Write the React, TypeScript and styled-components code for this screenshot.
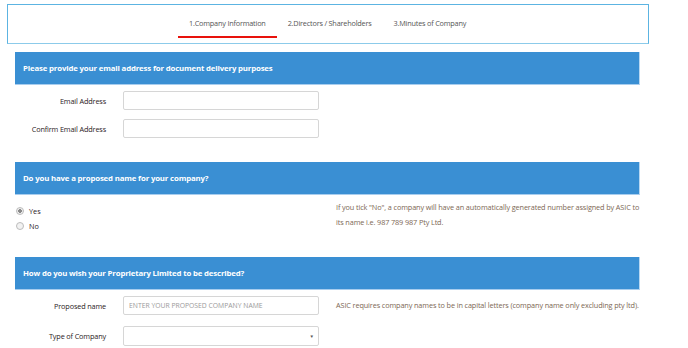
import React from "react";
import styled, { createGlobalStyle } from "styled-components";

const GlobalStyle = createGlobalStyle`
  body {
    margin: 0;
    background: #fff;
    font-family: "Open Sans", "Liberation Sans", sans-serif;
  }
`;

const Page = styled.div`
  width: 688px;
  height: 348px;
  padding: 4px 0 0 7px;
  box-sizing: border-box;
  overflow: hidden;
`;

const TabBar = styled.div`
  width: 642px;
  height: 40px;
  box-sizing: border-box;
  border: 1px solid #5cb4e2;
  border-bottom-color: #8ccbea;
  display: flex;
  padding-left: 170px;
`;

const Tab = styled.div<{ $active?: boolean }>`
  position: relative;
  padding: 0 11px;
  font-size: 7.3px;
  color: #555;
  line-height: 36px;
  letter-spacing: -0.2px;
  ${(p) =>
    p.$active &&
    `
    &::after {
      content: "";
      position: absolute;
      left: 0;
      right: 0;
      bottom: 5px;
      height: 2px;
      background: #e8120c;
    }
  `}
`;

const Section = styled.section`
  margin-left: 8px;
  width: 625px;
`;

const Header = styled.div<{ $top: number }>`
  margin-top: ${(p) => p.$top}px;
  height: 33px;
  box-sizing: border-box;
  background: #3a8fd3;
  border-right: 1px solid #b9d8f2;
  border-bottom: 1px solid #a8cdee;
  color: #fff;
  font-weight: 700;
  font-size: 7.8px;
  letter-spacing: -0.15px;
  display: flex;
  align-items: center;
  padding-left: 8px;
`;

const FormRow = styled.div<{ $top: number }>`
  display: flex;
  align-items: center;
  margin-top: ${(p) => p.$top}px;
`;

const Label = styled.label`
  width: 91px;
  text-align: right;
  font-size: 7.3px;
  font-weight: 500;
  color: #2a211d;
  letter-spacing: -0.15px;
  margin-right: 17px;
`;

const Input = styled.input`
  width: 196px;
  height: 19px;
  box-sizing: border-box;
  border: 1px solid #d6d6d6;
  border-radius: 2px;
  padding: 0 5px;
  font-family: inherit;
  font-size: 6.8px;
  outline: none;
  &::placeholder {
    color: #9a9a9a;
    text-transform: uppercase;
  }
`;

const Select = styled.div`
  width: 196px;
  height: 20px;
  box-sizing: border-box;
  border: 1px solid #d6d6d6;
  border-radius: 2px;
  display: flex;
  align-items: center;
  justify-content: flex-end;
  padding-right: 4px;
  font-size: 4.5px;
  color: #555;
`;

const Note = styled.p`
  margin: 0 0 0 17px;
  font-size: 7.3px;
  line-height: 15px;
  color: #7c6754;
  letter-spacing: -0.12px;
  white-space: nowrap;
`;

const QuestionRow = styled.div`
  display: flex;
  justify-content: space-between;
  margin-top: 5px;
`;

const Radios = styled.div`
  display: flex;
  flex-direction: column;
  gap: 5px;
  padding-top: 6px;
  padding-left: 1px;
`;

const RadioLabel = styled.label`
  display: flex;
  align-items: center;
  gap: 5px;
  font-size: 7.3px;
  color: #2a211d;
`;

const Dot = styled.span<{ $on?: boolean }>`
  width: 6px;
  height: 6px;
  border-radius: 50%;
  border: 1px solid #bcbcbc;
  background: ${(p) => (p.$on ? "radial-gradient(circle, #8a8a8a 0 1.6px, #eee 2px)" : "#f2f2f2")};
`;

const SideNote = styled.p`
  margin: 0;
  font-size: 7.3px;
  line-height: 15px;
  color: #7c6754;
  letter-spacing: -0.12px;
  width: 304px;
`;

export default function App() {
  return (
    <Page>
      <GlobalStyle />
      <TabBar>
        <Tab $active>1.Company Information</Tab>
        <Tab>2.Directors / Shareholders</Tab>
        <Tab>3.Minutes of Company</Tab>
      </TabBar>

      <Section>
        <Header $top={8}>Please provide your email address for document delivery purposes</Header>
        <FormRow $top={6}>
          <Label>Email Address</Label>
          <Input />
        </FormRow>
        <FormRow $top={9}>
          <Label>Confirm Email Address</Label>
          <Input />
        </FormRow>
      </Section>

      <Section>
        <Header $top={24}>Do you have a proposed name for your company?</Header>
        <QuestionRow>
          <Radios>
            <RadioLabel>
              <Dot $on /> Yes
            </RadioLabel>
            <RadioLabel>
              <Dot /> No
            </RadioLabel>
          </Radios>
          <SideNote>
            If you tick "No", a company will have an automatically generated number assigned by ASIC to its name i.e. 987 789 987 Pty Ltd.
          </SideNote>
        </QuestionRow>
      </Section>

      <Section>
        <Header $top={26}>How do you wish your Proprietary Limited to be described?</Header>
        <FormRow $top={6}>
          <Label>Proposed name</Label>
          <Input placeholder="Enter your proposed company name" />
          <Note>ASIC requires company names to be in capital letters (company name only excluding pty ltd).</Note>
        </FormRow>
        <FormRow $top={11}>
          <Label>Type of Company</Label>
          <Select>▼</Select>
        </FormRow>
      </Section>
    </Page>
  );
}
